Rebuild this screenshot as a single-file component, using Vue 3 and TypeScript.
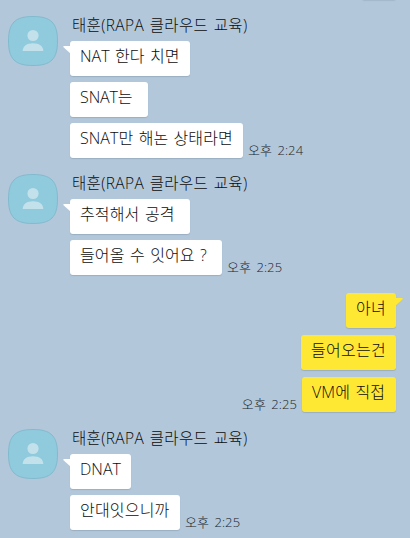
<script setup lang="ts">
interface Message {
  text: string
  width: number
  spacing?: number
  time?: string
}

interface Group {
  id: number
  mine: boolean
  sender?: string
  messages: Message[]
}

const sender = '태훈(RAPA 클라우드 교육)'

const groups: Group[] = [
  {
    id: 1,
    mine: false,
    sender,
    messages: [
      { text: 'NAT 한다 치면', width: 120, spacing: 0.05 },
      { text: 'SNAT는', width: 78, spacing: -0.1 },
      { text: 'SNAT만 해논 상태라면', width: 173, spacing: 0.05, time: '오후 2:24' },
    ],
  },
  {
    id: 2,
    mine: false,
    sender,
    messages: [
      { text: '추적해서 공격', width: 120, spacing: 0.15 },
      { text: '들어올 수 잇어요 ?', width: 152, spacing: 0.1, time: '오후 2:25' },
    ],
  },
  {
    id: 3,
    mine: true,
    messages: [
      { text: '아녀', width: 50, spacing: 0.2 },
      { text: '들어오는건', width: 95, spacing: 0.3 },
      { text: 'VM에 직접', width: 94, spacing: 0.1, time: '오후 2:25' },
    ],
  },
  {
    id: 4,
    mine: false,
    sender,
    messages: [
      { text: 'DNAT', width: 61, spacing: 0.05 },
      { text: '안대잇으니까', width: 110, spacing: 0.2, time: '오후 2:25' },
    ],
  },
]
</script>

<template>
  <main class="chat">
    <div class="previous"></div>
    <section v-for="group in groups" :key="group.id" class="group" :class="{ mine: group.mine }">
      <svg v-if="!group.mine" class="avatar" viewBox="0 0 50 50" aria-hidden="true">
        <path
          d="M25 .5C43 .5 49.5 7 49.5 25S43 49.5 25 49.5.5 43 .5 25 7 .5 25 .5Z"
          fill="#90cadd"
          stroke="#83bacd"
        />
        <circle cx="25" cy="19.5" r="5.6" fill="#c2e1eb" />
        <path d="M14.7 35C14.7 30 19 27.3 25 27.3S35.3 30 35.3 35Z" fill="#c2e1eb" />
      </svg>
      <div class="body">
        <div v-if="group.sender" class="sender">{{ group.sender }}</div>
        <div class="messages">
          <div v-for="(message, index) in group.messages" :key="index" class="row">
            <div class="bubble" :style="{ width: message.width + 'px', letterSpacing: (message.spacing ?? 0) + 'px' }">
              <svg v-if="index === 0" class="tail" viewBox="0 0 8 9" aria-hidden="true">
                <path d="M8 0H1Q-.3.4.8 1.5L8 8Z" />
              </svg>
              {{ message.text }}
            </div>
            <time v-if="message.time" class="time">{{ message.time }}</time>
          </div>
        </div>
      </div>
    </section>
  </main>
</template>

<style>
body {
  background: #b2c7da;
}
</style>

<style scoped>
.chat {
  position: relative;
  box-sizing: border-box;
  width: 410px;
  height: 538px;
  padding: 16px 14px 0 8px;
  overflow: hidden;
  background: #b2c7da;
  color: #0c0c0c;
  font-family: 'Open Sans', 'Noto Sans CJK KR', sans-serif;
  font-size: 16px;
  font-weight: 300;
  word-spacing: 1.2px;
}
.previous {
  position: absolute;
  top: -5px;
  left: 362px;
  width: 34px;
  height: 5px;
  border-radius: 3px;
  box-shadow: 0 1px 1px #a3b7ca;
}
.group {
  display: flex;
  align-items: flex-start;
  gap: 12px;
  margin-bottom: 16px;
}
.group.mine {
  justify-content: flex-end;
  margin-top: 18px;
  margin-bottom: 17px;
}
.avatar {
  width: 50px;
  height: 50px;
  flex: none;
}
.sender {
  height: 25px;
  padding-left: 2px;
  line-height: 18px;
  font-size: 15.5px;
  letter-spacing: 0.35px;
  white-space: nowrap;
}
.messages {
  display: flex;
  flex-direction: column;
  gap: 6px;
}
.mine .messages {
  align-items: flex-end;
  gap: 7px;
}
.row {
  display: flex;
  align-items: flex-end;
  gap: 5px;
}
.mine .row {
  flex-direction: row-reverse;
}
.bubble {
  position: relative;
  box-sizing: border-box;
  height: 35px;
  padding-left: 10px;
  border-radius: 3px;
  background: #fff;
  box-shadow: 0 1px 1px #9bafc1;
  line-height: 31px;
  white-space: nowrap;
}
.mine .bubble {
  background: #ffe833;
}
.tail {
  position: absolute;
  top: 5px;
  left: -7px;
  width: 8px;
  height: 9px;
  fill: #fff;
}
.mine .tail {
  left: auto;
  right: -7px;
  transform: scaleX(-1);
  fill: #ffe833;
}
.time {
  height: 17px;
  color: #20252a;
  font-size: 13px;
  line-height: 19px;
  letter-spacing: 0.1px;
  word-spacing: 1.8px;
  white-space: nowrap;
}
</style>
